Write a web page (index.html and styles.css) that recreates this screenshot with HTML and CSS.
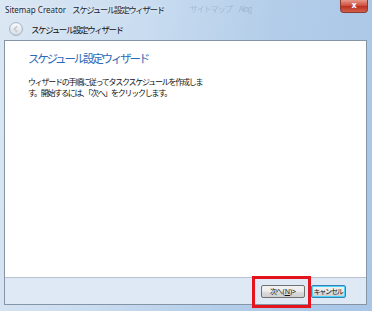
FILE: index.html
```html
<!DOCTYPE html>
<html lang="ja">
<head>
<meta charset="utf-8">
<link rel="stylesheet" href="styles.css">
</head>
<body>
<div class="window">
  <div class="titlebar">
    <span class="title"><span class="latin">Sitemap Creator</span><span class="jp">スケジュール設定ウィザード</span></span>
    <span class="ghost">サイトマップ　Alog</span>
    <div class="close">x</div>
  </div>
  <div class="header">
    <span class="back"><svg width="14" height="14" viewBox="0 0 14 14"><defs><linearGradient id="g" x1="0" y1="0" x2="0" y2="1"><stop offset="0" stop-color="#fbfdff"/><stop offset="1" stop-color="#d3dbe4"/></linearGradient></defs><circle cx="7" cy="7" r="6.4" fill="url(#g)" stroke="#9aa7b5" stroke-width="0.9"/><path d="M8.2 4.2 L5.3 7 L8.2 9.8" fill="none" stroke="#c5ccd4" stroke-width="1.6"/></svg></span>
    <span class="htext">スケジュール設定ウィザード</span>
  </div>
  <div class="panel">
    <div class="content">
      <div class="heading">スケジュール設定ウィザード</div>
      <p class="desc">ウィザードの手順に従ってタスクスケジュールを作成しま<br>す。開始するには、「次へ」をクリックします。</p>
    </div>
    <div class="footer">
      <button class="btn next"><span class="jp">次へ</span>(<u>N</u>)&gt;</button>
      <button class="btn default"><span class="jp">キャンセル</span></button>
    </div>
  </div>
  <div class="mark"></div>
</div>
</body>
</html>
```
FILE: styles.css
```css
* { box-sizing: border-box; }
html, body { margin: 0; padding: 0; }
body {
  width: 372px; height: 311px; overflow: hidden;
  font-family: "Noto Sans CJK JP", "Noto Sans", sans-serif;
}
.window {
  position: relative;
  width: 372px; height: 311px;
  background: linear-gradient(100deg, #dbe7f3 0%, #c9dcf0 35%, #b3cde9 65%, #a9c6e8 100%);
  display: flex; flex-direction: column;
}
.titlebar {
  position: relative;
  height: 17px;
  display: flex; align-items: center;
  padding-left: 5px;
}
.title {
  font-size: 8.5px; color: #1d2733;
  white-space: nowrap;
  text-shadow: 0 0 4px rgba(255,255,255,0.9);
}
.title .latin { font-family: "Noto Sans", sans-serif; font-size: 8px; margin-right: 6px; letter-spacing: 0; }
.title .jp { letter-spacing: -1.4px; }
.ghost {
  margin-left: 26px;
  font-size: 8px; letter-spacing: -1px; color: rgba(90,110,140,0.28);
  filter: blur(0.7px);
  white-space: nowrap;
}
.close {
  position: absolute; left: 340px; top: 0;
  width: 28px; height: 13px;
  border: 1px solid #8a3b33; border-top: none;
  border-radius: 0 0 4px 4px;
  background: linear-gradient(#e69a8c, #cf4a39 50%, #b8301f 51%, #d4604c);
  color: #fff; font-family: "DejaVu Sans", sans-serif; font-weight: bold;
  font-size: 8px; line-height: 11px; text-align: center;
}
.header {
  height: 23px;
  display: flex; align-items: center;
  padding-left: 9px;
}
.back { width: 14px; height: 14px; display: flex; }
.htext {
  margin-left: 8px;
  font-size: 8.5px; letter-spacing: -1.4px; color: #111;
  white-space: nowrap;
}
.panel {
  margin-left: 4px; width: 363px; height: 265px;
  border: 1px solid #8595a6;
  display: flex; flex-direction: column;
}
.content {
  flex: 1;
  background: #fff;
  border-bottom: 1px solid #b5c3d3;
  padding: 9px 0 0 23px;
}
.heading {
  font-size: 11.5px; letter-spacing: -2.2px; color: #2c6bb8;
  line-height: 16px; white-space: nowrap;
}
.desc {
  margin: 11px 0 0 0;
  font-size: 8px; letter-spacing: -1.25px; line-height: 10.5px; color: #111;
  white-space: nowrap;
}
.footer {
  height: 26px;
  background: #dfe9f5;
  display: flex; justify-content: flex-end; align-items: flex-start;
  gap: 6px;
  padding: 7px 20px 0 0;
}
.btn {
  height: 13px; padding: 0;
  display: flex; align-items: center; justify-content: center;
  font-family: "Noto Sans", sans-serif;
  font-size: 7px; line-height: 11px; color: #111;
  border: 1px solid #707070; border-radius: 2px;
  background: linear-gradient(#f2f2f2, #ebebeb 50%, #dddddd 51%, #cfcfcf);
  white-space: nowrap;
}
.btn .jp { font-family: "Noto Sans CJK JP", sans-serif; letter-spacing: -1.2px; margin-right: 1px; }
.btn.next { width: 44px; }
.btn.default { width: 35px; border-color: #3c7fb1; box-shadow: inset 0 0 0 1px #48d5fd; }
.mark {
  position: absolute; left: 252px; top: 276px;
  width: 59px; height: 32px;
  border: 3px solid #e3141e;
}
```
